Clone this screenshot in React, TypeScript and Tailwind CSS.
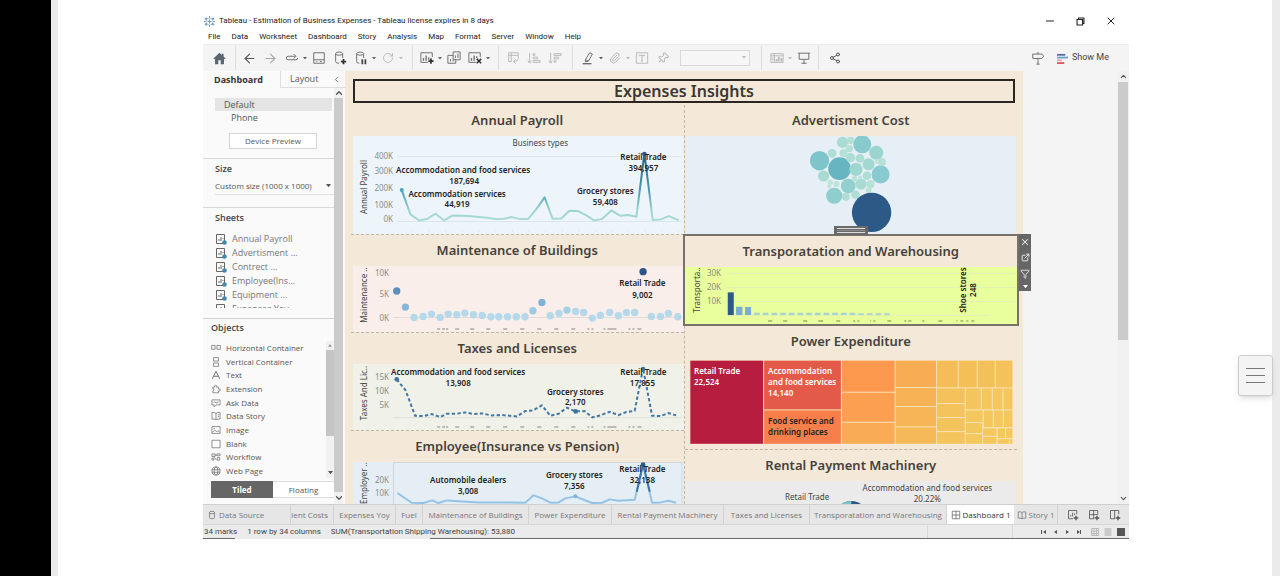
import React from "react";
import { ArrowLeft, ArrowRight, ChevronDown, ChevronLeft, ChevronUp, ExternalLink, Filter, Minus, Paperclip, Pin, RotateCw, Share2, X } from "lucide-react";

type IconProps = { children: React.ReactNode; className?: string };

function Icon({ children, className = "size-[14px] text-[#6e6e6e]" }: IconProps) {
  return (
    <svg viewBox="0 0 16 16" fill="none" stroke="currentColor" strokeWidth="1.1" className={className} aria-hidden="true">
      {children}
    </svg>
  );
}

function Tool({ label, children }: { label: string; children: React.ReactNode }) {
  return (
    <button aria-label={label} className="flex h-5 w-[21px] items-center justify-center">
      {children}
    </button>
  );
}

function Caret({ label, faint }: { label: string; faint?: boolean }) {
  return (
    <button aria-label={label} className="flex h-5 w-[6px] items-center justify-center">
      <svg viewBox="0 0 6 4" className={faint ? "w-1 text-[#bdbdbd]" : "w-1 text-[#666]"} fill="currentColor" aria-hidden="true">
        <path d="M0 0h6L3 4z" />
      </svg>
    </button>
  );
}

const dim = "size-[14px] text-[#b9b9b9]";

function TitleBar() {
  return (
    <header className="flex h-[18px] items-center text-[#222]">
      <Icon className="ml-px size-[11px] text-[#4a7ba8]">
        <circle cx="8" cy="8" r="5" stroke="#9bbcd8" />
        <path d="M8 5v6M5 8h6M3 2v4M1 4h4M13 2v4M11 4h4M3 10v4M1 12h4M13 10v4M11 12h4M8 0v3M8 13v3M0 8h2.500M13.500 8H16" />
      </Icon>
      <h1 className="ml-1 whitespace-nowrap font-['Roboto',sans-serif] text-[8px]">
        Tableau - Estimation of Business Expenses - Tableau license expires in 8 days
      </h1>
      <div className="ml-auto flex items-center gap-[19px] pr-3">
        <button aria-label="Minimize"><Minus className="size-3" strokeWidth={2} /></button>
        <button aria-label="Restore">
          <Icon className="size-[11px] text-[#222]">
            <path strokeWidth="1.6" d="M3 5h8v8H3zM5 5V3h8v8h-2" />
          </Icon>
        </button>
        <button aria-label="Close"><X className="size-3" strokeWidth={2} /></button>
      </div>
    </header>
  );
}

const menus = ["File", "Data", "Worksheet", "Dashboard", "Story", "Analysis", "Map", "Format", "Server", "Window", "Help"];

function MenuBar() {
  return (
    <nav className="flex h-[14px] items-center gap-[11px] pl-[5px] font-['Roboto',sans-serif] text-[8px] text-[#222]">
      {menus.map((m) => (
        <button key={m}>{m}</button>
      ))}
    </nav>
  );
}

function Sep() {
  return <span className="h-6 w-px bg-[#dcdcdc]" />;
}

function Toolbar() {
  return (
    <div className="flex h-[27px] items-center border-t border-[#ececec] bg-[#f4f4f4]">
      <button aria-label="Start page" className="flex w-8 justify-center">
        <svg viewBox="0 0 16 16" className="size-[13px] fill-[#5c6670]" aria-hidden="true">
          <path d="M8 1 .500 8l1 1L2.500 8v7H6.500v-5h3v5h4V8l1 1 1-1L13 5.500V2h-2v1.800z" />
        </svg>
      </button>
      <Sep />
      <div className="flex items-center pl-[3px] pr-2">
        <Tool label="Undo"><ArrowLeft className="size-[15px] text-[#555]" strokeWidth={1.8} /></Tool>
        <Tool label="Redo"><ArrowRight className="size-[15px] text-[#aaa]" strokeWidth={1.8} /></Tool>
        <Tool label="Replay"><Icon><path d="M12 6H3.500Q1.500 6 1.500 8t2 2h9q2 0 2-2M10 3.500 12.500 6 10 8.500" /></Icon></Tool>
        <Caret label="Replay options" />
        <Tool label="Save"><Icon><path d="M2 2h12v12H2zM2 10h12M5 12h1M9 12h2" /></Icon></Tool>
        <Tool label="New data source">
          <Icon><ellipse cx="7" cy="3" rx="4" ry="1.800" /><path d="M3 3v9q0 2 4 2M11 3v5" /><path strokeWidth="2" d="M12 9v6M9 12h6" stroke="#333" /></Icon>
        </Tool>
        <Tool label="Pause updates">
          <Icon><ellipse cx="7" cy="3" rx="4" ry="1.800" /><path d="M3 3v9q0 2 3 2M11 3v5" /><path strokeWidth="2" d="M9.500 9.500V15M13 9.500V15" stroke="#444" /></Icon>
        </Tool>
        <Caret label="Pause options" />
        <Tool label="Refresh"><RotateCw className="size-3 text-[#b9b9b9]" strokeWidth={1.8} /></Tool>
        <Caret label="Refresh options" faint />
      </div>
      <Sep />
      <div className="flex items-center pl-[3px] pr-[7px]">
        <Tool label="New worksheet">
          <Icon><path d="M14 7V2H1v11h8" /><path strokeWidth="1.500" d="M4 11V8M7 11V5M10 10V7" /><path strokeWidth="2" d="M12.500 8.500v6M9.500 11.500h6" stroke="#333" /></Icon>
        </Tool>
        <Caret label="New worksheet options" />
        <Tool label="Duplicate"><Icon><path d="M7 1h8v9H7zM7 5H1v9h9v-4M4 12V9M9.500 8V5M12.500 8V3M7 12v-2" /></Icon></Tool>
        <Tool label="Clear sheet">
          <Icon><path d="M14 7V2H1v11h8" /><path strokeWidth="1.500" d="M4 11V8M7 11V5M10 8V6" /><path strokeWidth="1.800" d="m10 9 5 5M15 9l-5 5" stroke="#333" /></Icon>
        </Tool>
        <Caret label="Clear options" />
      </div>
      <Sep />
      <div className="flex items-center pl-[3px] pr-[7px]">
        <Tool label="Swap rows and columns"><Icon className={dim}><path d="M3 2h11v3H6v7H3zM6 2v3M3 5h3M14 5v3q0 4-5 4M11 9.500 8.500 12l2.500 2.500" /></Icon></Tool>
        <Tool label="Sort ascending"><Icon className={dim}><path d="M3 2v11M1 11l2 3 2-3M7 3h2v2H7zM7 7h5v2H7zM7 11h8v2H7z" /></Icon></Tool>
        <Tool label="Sort descending"><Icon className={dim}><path d="M3 2v11M1 11l2 3 2-3M7 3h8v2H7zM7 7h5v2H7zM7 11h2v2H7z" /></Icon></Tool>
      </div>
      <Sep />
      <div className="flex items-center pl-1 pr-[11px]">
        <Tool label="Highlight"><Icon><path d="M5 10 10 2l3 1.500-4.500 8L5 12.500zM5 10l3.500 1.500" /><path strokeWidth="1.600" d="M2 14.500h10" /></Icon></Tool>
        <Caret label="Highlight options" />
        <Tool label="Group"><Paperclip className="size-3 text-[#b9b9b9]" strokeWidth={2} /></Tool>
        <Caret label="Group options" faint />
        <Tool label="Show labels"><Icon className={dim}><path d="M1.500 2h13v12h-13zM5 6V5h6v1M8 5v6.500M7 11.500h2" /></Icon></Tool>
        <Tool label="Fix axes"><Pin className="size-3 rotate-45 text-[#b9b9b9]" strokeWidth={2} /></Tool>
        <div className="relative ml-[7px]">
          <select aria-label="Fit" className="block h-4 w-[70px] appearance-none border border-[#d9d9d9] bg-[#f6f6f6]" />
          <svg viewBox="0 0 6 4" className="absolute right-1 top-1.5 w-1 fill-[#bdbdbd]" aria-hidden="true"><path d="M0 0h6L3 4z" /></svg>
        </div>
      </div>
      <Sep />
      <div className="flex items-center pl-1 pr-1">
        <Tool label="Show cards"><Icon className={dim}><path d="M1 3h14v10H1zM1 5.500h14M5 3v10M2 8h2M2 10h2" /><path strokeWidth="2" d="M7.500 12V9M10 12V6.500M13 12V8" /></Icon></Tool>
        <Caret label="Card options" faint />
        <Tool label="Presentation mode"><Icon><path d="M1 2.500h14M2.500 2.500v7h11v-7M8 9.500V14M5 14h6" /></Icon></Tool>
      </div>
      <Sep />
      <div className="pl-[5px]">
        <Tool label="Share"><Share2 className="size-3 text-[#555]" strokeWidth={2} /></Tool>
      </div>
      <button aria-label="Guide" className="ml-auto">
        <Icon><path d="M2 3.500h10.500l2 2.500-2 2.500H2zM8 1v2.500M8 8.500V15M6 15h4" /></Icon>
      </button>
      <button className="ml-3 mr-5 flex items-center gap-1 font-['Roboto',sans-serif] text-[9px] text-[#444]">
        <svg viewBox="0 0 12 12" className="size-[11px]" aria-hidden="true">
          <path stroke="#5f6fa8" strokeWidth="2" d="M0 2h9" />
          <path stroke="#6f9fd0" strokeWidth="2" d="M0 5h12" />
          <path stroke="#f0a0a0" strokeWidth="2" d="M0 8h5" />
          <path stroke="#e05560" strokeWidth="2" d="M0 11h8" />
        </svg>
        Show Me
      </button>
    </div>
  );
}

const sheets = ["Annual Payroll", "Advertisment ...", "Contrect ...", "Employee(Ins...", "Equipment ...", "Expenses Yoy"];

const objects: { name: string; icon: React.ReactNode }[] = [
  { name: "Horizontal Container", icon: <path d="M1 4h5.500v6H1zM9.500 4H15v6H9.500z" /> },
  { name: "Vertical Container", icon: <path d="M4 1h8v5.500H4zM4 9.500h8V15H4z" /> },
  { name: "Text", icon: <path strokeWidth="1.500" d="M2 14 8 2l6 12M4.500 10h7" /> },
  { name: "Extension", icon: <path d="M3 5h3q-1-3 1.500-3T9 5h3v3q3-1 3 1.500T12 11v3H3v-3q2-.5 2-2T3 8z" /> },
  { name: "Ask Data", icon: <path d="M1.500 3h13v8H8l-3 3v-3H1.500zM4 8l2-2 2 2 4-2" /> },
  { name: "Data Story", icon: <path d="M8 3.500V14M1.500 2.500H6L8 4l2-1.500h4.500V13H10l-2 1-2-1H1.500zM11 6h2M11 9h2" /> },
  { name: "Image", icon: <path d="M1.500 2.500h13v11h-13zM2 12l4-4 3 3 2-2 3 3M4 5.500h2" /> },
  { name: "Blank", icon: <path d="M1.500 2h13v12h-13z" /> },
  { name: "Workflow", icon: <path d="M1.500 3h5v4h-5zM9.500 3h5v3h-5zM1.500 10h3v3h-3zM6.500 5h3M4 7l5 6M10 9h4v4h-4z" /> },
  { name: "Web Page", icon: <><circle cx="8" cy="8" r="6.500" /><ellipse cx="8" cy="8" rx="3" ry="6.500" /><path d="M1.500 6h13M1.500 10h13" /></> },
];

function SidePanel() {
  return (
    <aside className="flex w-[142px] shrink-0 flex-col bg-[#fafafa] font-['Open_Sans',sans-serif] text-[#555]">
      <div className="flex h-[17px] items-stretch text-[9px]">
        <button className="w-[77px] pl-[11px] text-left font-bold text-[#333]">Dashboard</button>
        <button className="flex-1 border-b border-l border-[#dedede] pl-[9px] text-left">Layout</button>
        <button aria-label="Collapse pane" className="border-b border-[#dedede] pr-1"><ChevronLeft className="size-[9px]" /></button>
      </div>
      <div className="flex flex-1 pr-[2px]">
        <div className="flex min-w-0 flex-1 flex-col text-[8px]">
          <section className="h-[71px] border-b border-[#d9d9d9] pl-3 pt-[10px]">
            <button className="block h-[13px] w-[117px] bg-[#e4e4e4] pl-[9px] text-left text-[9px] leading-[13px]">Default</button>
            <button className="block h-[14px] pl-4 text-[9px] leading-[14px]">Phone</button>
            <button className="ml-[14px] mt-2 block h-4 w-[88px] border border-[#d5d5d5] bg-white leading-[14px]">Device Preview</button>
          </section>
          <section className="h-[49px] border-b border-[#d9d9d9] pl-3 pt-[3px]">
            <h2 className="text-[9px] font-semibold leading-[14px] text-[#444]">Size</h2>
            <div className="relative mt-[2px] border-b border-[#e2e2e2]">
              <select aria-label="Dashboard size" className="block h-4 w-full appearance-none bg-transparent">
                <option>Custom size (1000 x 1000)</option>
              </select>
              <svg viewBox="0 0 6 4" className="absolute right-[3px] top-1.5 w-[5px] fill-[#555]" aria-hidden="true"><path d="M0 0h6L3 4z" /></svg>
            </div>
          </section>
          <section className="h-[111px] border-b border-[#d0d0d0] pl-3 pt-[3px]">
            <h2 className="text-[9px] font-semibold leading-[14px] text-[#444]">Sheets</h2>
            <ul className="mt-[7px] h-[76px] overflow-hidden text-[9px] text-[#777]">
              {sheets.map((s) => (
                <li key={s} className="flex h-[14px] items-center gap-[5px]">
                  <svg viewBox="0 0 12 12" className="size-3" fill="none" aria-hidden="true">
                    <path stroke="#666" d="M1.500 1.500h8v9h-8zM4 8V6M6 8V4M8 6V5" />
                    <circle cx="9.500" cy="9.500" r="2.300" fill="#4689ac" />
                  </svg>
                  <span>{s}</span>
                </li>
              ))}
            </ul>
          </section>
          <section className="flex flex-1 flex-col pl-2">
            <h2 className="pt-px text-[9px] font-semibold leading-4 text-[#444]">Objects</h2>
            <div className="mt-[5px] flex">
              <ul className="grid h-[137px] flex-1 grid-rows-10">
                {objects.map((o) => (
                  <li key={o.name} className="flex items-center gap-[5px] whitespace-nowrap">
                    <Icon className="size-[10px] text-[#666]">{o.icon}</Icon>
                    <span>{o.name}</span>
                  </li>
                ))}
              </ul>
              <div className="flex w-2 flex-col items-center bg-[#f1f1f1]">
                <svg viewBox="0 0 6 4" className="my-[3px] w-1 fill-[#999]" aria-hidden="true"><path d="M0 4h6L3 0z" /></svg>
                <div className="h-[86px] w-full bg-[#c4c4c4]" />
                <svg viewBox="0 0 6 4" className="mb-1 mt-auto w-[5px] fill-[#555]" aria-hidden="true"><path d="M0 0h6L3 4z" /></svg>
              </div>
            </div>
            <div className="mt-[3px] flex h-[17px] text-[8px]">
              <button className="w-[62px] bg-[#666] font-bold text-white">Tiled</button>
              <button className="flex-1 border-y border-[#ddd] bg-white">Floating</button>
            </div>
          </section>
        </div>
        <div className="flex w-[9px] flex-col items-center bg-[#f1f1f1]">
          <ChevronUp className="size-[10px] text-[#555]" strokeWidth={3} />
          <div className="w-full flex-1 bg-[#cbcbcb]" />
          <ChevronDown className="my-px size-[10px] text-[#555]" strokeWidth={3} />
        </div>
      </div>
    </aside>
  );
}

type TextProps = { x: number; y: number; children: React.ReactNode };

function Mark({ x, y, children }: TextProps) {
  return <text x={x} y={y} textAnchor="middle" className="fill-[#222] text-[8px] font-semibold">{children}</text>;
}

function Tick({ x, y, children }: TextProps) {
  return <text x={x} y={y} textAnchor="end" className="fill-[#8c8c8c] text-[8px]">{children}</text>;
}

function AxisTitle({ x, y, children }: TextProps) {
  return <text transform={`translate(${x} ${y}) rotate(-90)`} textAnchor="middle" className="fill-[#444] text-[8px]">{children}</text>;
}

const chartFont = "block w-full font-['Noto_Sans',sans-serif]";

function AnnualPayroll() {
  return (
    <svg viewBox="353 136 330 98" className={`${chartFont} bg-[#edf5fa]`} role="img" aria-label="Annual Payroll line chart">
      <defs>
        <linearGradient id="payroll" gradientUnits="userSpaceOnUse" x1="0" y1="160" x2="0" y2="361">
          <stop offset="0" stopColor="#2c5985" /><stop offset=".55" stopColor="#4a9cb3" /><stop offset=".85" stopColor="#9bd5cc" /><stop offset="1" stopColor="#aadbd1" />
        </linearGradient>
      </defs>
      <path stroke="#dde6ea" d="M397 221.500h284M397 156.500h284" />
      <path stroke="#cfdde2" strokeDasharray="1 15.600" d="M412 230.500h270" />
      <g transform="translate(345 100) scale(.3333)">
        <polyline fill="none" stroke="url(#payroll)" strokeWidth="6" strokeLinejoin="round" points="170,270 196,343 222,361 245,357 271,341 297,361 322,346 370,348 425,353 450,357 475,356 500,351 525,357 548,357 575,325 598,292 622,356 648,355 672,332 698,333 722,345 746,361 770,357 798,331 824,347 848,345 873,350 897,160 922,360 946,358 970,348 1000,361" />
        <circle cx="170" cy="270" r="6" fill="#4aa5bb" /><circle cx="897" cy="162" r="7" fill="#2c5985" />
      </g>
      <text x="540" y="146" textAnchor="middle" className="fill-[#444] text-[8px]">Business types</text>
      <Tick x={393} y={159}>400K</Tick><Tick x={393} y={174}>300K</Tick><Tick x={393} y={191}>200K</Tick><Tick x={393} y={208}>100K</Tick><Tick x={393} y={222}>0K</Tick>
      <AxisTitle x={367} y={187}>Annual Payroll</AxisTitle>
      <Mark x={463} y={173}>Accommodation and food services</Mark><Mark x={464} y={184}>187,694</Mark>
      <Mark x={457} y={197}>Accommodation services</Mark><Mark x={457} y={207}>44,919</Mark>
      <Mark x={605} y={194}>Grocery stores</Mark><Mark x={605} y={205}>59,408</Mark>
      <Mark x={643} y={160}>Retail Trade</Mark><Mark x={643} y={171}>394,957</Mark>
    </svg>
  );
}

const pale = "#b5d8ea";
const dots: [number, number, string?][] = [
  [155, 168, "#5b8fbd"], [181, 216, "#85b8da"], [207, 247], [234, 244], [259, 237], [285, 247], [309, 237], [335, 239], [359, 234], [385, 239], [411, 241],
  [437, 245], [461, 245], [487, 245], [513, 245], [539, 245], [563, 227, "#9dcae3"], [590, 202, "#7fb2d6"], [615, 242], [641, 235], [665, 225, "#a5cfe6"], [691, 229],
  [715, 232], [741, 249], [765, 241], [793, 232], [819, 242], [843, 232], [868, 232], [893, 110, "#2a5783"], [918, 244], [945, 244], [969, 235], [997, 245],
];

const clipped = "M437 0h3M442 0h3M446 0h2M455 0h4M470 0h4M486 0h4M503 0h4M520 0h4M537 0h4M554 0h4M571 0h4M587 0h2M591 0h2M603 0h2M607 0h9M628 0h2M632 0h2M637 0h4";

function Maintenance() {
  return (
    <svg viewBox="353 266 330 66" className={`${chartFont} bg-[#f9eee9]`} role="img" aria-label="Maintenance of Buildings dot chart">
      <path stroke="#e4dcda" d="M393 317.500h288" />
      <path stroke="#8a8480" d={clipped} transform="translate(0 329)" />
      <g transform="translate(345 235) scale(.3333)">
        {dots.map(([x, y, c]) => <circle key={x} cx={x} cy={y} r="11" fill={c ?? pale} />)}
      </g>
      <Tick x={389} y={276}>10K</Tick><Tick x={389} y={297}>5K</Tick><Tick x={389} y={321}>0K</Tick>
      <AxisTitle x={367} y={295}>Maintenance ..</AxisTitle>
      <Mark x={642} y={286}>Retail Trade</Mark><Mark x={642} y={298}>9,002</Mark>
    </svg>
  );
}

function Taxes() {
  return (
    <svg viewBox="353 364 330 66" className={`${chartFont} bg-[#f0f1e8]`} role="img" aria-label="Taxes and Licenses line chart">
      <path stroke="#e0e2da" d="M393 417.500h288" />
      <path stroke="#8a8480" d={clipped} transform="translate(0 427)" />
      <g transform="translate(345 365) scale(.3333)">
        <polyline fill="none" stroke="#4377a8" strokeWidth="6" strokeDasharray="10 7" points="155,43 181,75 210,152 235,153 260,147 285,156 305,146 335,146 360,142 385,147 411,145 437,151 470,150 515,154 540,138 563,136 590,121 615,152 640,146 665,128 691,139 718,138 741,157 765,151 793,140 819,150 843,141 868,137 893,10 920,152 945,153 969,144 992,151" />
        <g fill="#3f73a3"><circle cx="155" cy="43" r="7" /><circle cx="691" cy="139" r="7" /><circle cx="893" cy="12" r="7" /></g>
      </g>
      <Tick x={389} y={380}>15K</Tick><Tick x={389} y={394}>10K</Tick><Tick x={389} y={408}>5K</Tick>
      <AxisTitle x={367} y={393}>Taxes And Lic..</AxisTitle>
      <Mark x={458} y={375}>Accommodation and food services</Mark><Mark x={458} y={386}>13,908</Mark>
      <Mark x={575} y={395}>Grocery stores</Mark><Mark x={575} y={405}>2,170</Mark>
      <Mark x={643} y={375}>Retail Trade</Mark><Mark x={642} y={386}>17,855</Mark>
    </svg>
  );
}

function Employee() {
  return (
    <svg viewBox="353 462 330 42" className={`${chartFont} bg-[#e6eef5]`} role="img" aria-label="Employee insurance and pension line chart">
      <path stroke="#cfd6dc" fill="none" d="M393.500 504V462.500h288V504" />
      <g transform="translate(345 365) scale(.3333)">
        <polyline fill="none" stroke="#94c3e4" strokeWidth="6" strokeLinejoin="round" points="157,384 200,413 235,414 262,406 280,414 305,406 400,412 540,413 565,391 590,400 615,413 640,412 660,400 690,394 715,404 741,414 770,413 793,403 819,407 868,404 893,297 920,413 945,412 969,407 992,413" />
        <path fill="none" stroke="#3f73a3" strokeWidth="6" strokeLinejoin="round" d="m874 380 19-82 20 82" />
        <circle cx="893" cy="299" r="7" fill="#2c5985" /><circle cx="690" cy="394" r="6" fill="#7fb3da" />
      </g>
      <Tick x={389} y={483}>20K</Tick><Tick x={389} y={496}>10K</Tick>
      <AxisTitle x={367} y={483}>Employer ..</AxisTitle>
      <Mark x={468} y={483}>Automobile dealers</Mark><Mark x={468} y={494}>3,008</Mark>
      <Mark x={574} y={478}>Grocery stores</Mark><Mark x={574} y={489}>7,356</Mark>
      <Mark x={642} y={472}>Retail Trade</Mark><Mark x={642} y={483}>32,138</Mark>
    </svg>
  );
}

const bubbles: [number, number, number, string][] = [
  [418, 182, 29, "#7dc5ca"], [478, 206, 34, "#66b5c1"], [546, 133, 27, "#88cacd"], [588, 158, 21, "#9bd4cf"], [601, 223, 27, "#88cacd"],
  [487, 127, 17, "#a9dbd3"], [511, 121, 11, "#b4e0d6"], [507, 146, 11, "#b4e0d6"], [456, 160, 13, "#aeddd4"], [490, 160, 12, "#b4e0d6"],
  [511, 173, 14, "#aeddd4"], [539, 175, 13, "#aeddd4"], [565, 193, 18, "#a3d8d1"], [605, 186, 12, "#b4e0d6"], [527, 208, 20, "#9fd6d0"],
  [560, 227, 13, "#aeddd4"], [430, 228, 17, "#a9dbd3"], [504, 258, 22, "#93d0cd"], [542, 252, 17, "#a9dbd3"], [462, 287, 24, "#8fcecd"],
  [497, 290, 12, "#b0ded5"], [526, 284, 13, "#b0ded5"], [571, 252, 12, "#b4e0d6"], [565, 270, 9, "#b9e2d9"], [450, 247, 8, "#bce4da"],
  [469, 252, 9, "#b9e2d9"], [447, 259, 6, "#bce4da"], [523, 235, 8, "#b9e2d9"], [589, 185, 6, "#bce4da"], [540, 232, 6, "#bce4da"], [574, 337, 59, "#2c5985"],
];

function Advertisement() {
  return (
    <svg viewBox="686 136 330 98" className="block w-full bg-[#e6eff5]" role="img" aria-label="Advertisement cost bubble chart">
      <g transform="translate(680 100) scale(.3333)">
        {bubbles.map(([x, y, r, c], i) => <circle key={i} cx={x} cy={y} r={r} fill={c} />)}
      </g>
    </svg>
  );
}

const bars = [234, 260, 286, 312, 338, 364, 390, 416, 442, 468, 494, 520, 546, 572, 598, 624];

function Transportation() {
  return (
    <svg viewBox="685 267 332 57" className={`${chartFont} bg-[#e9ff9d]`} role="img" aria-label="Transportation and Warehousing bar chart">
      <path stroke="#e3f2b4" d="M727 273.500h288M727 287.500h288M727 301.500h288M727 315.500h262" />
      <g transform="translate(680 230) scale(.3333)">
        <path fill="#2c5985" d="M143 187h18v68h-18z" /><path fill="#79aed2" d="M168 230h19v25h-19zM195 231h18v24h-18z" />
        {bars.map((x) => <rect key={x} x={x - 12} y={x > 520 ? 250 : 248} width="17" height={x > 520 ? 5 : 7} fill="#a9d2d0" />)}
      </g>
      <path stroke="#7b8a4a" d="M768 321h4M783 321h4M803 321h4M818 321h5M836 321h4M853 321h2M857 321h2M870 321h1M873 321h2M887 321h4M904 321h2M908 321h3M922 321h2M938 321h4M956 321h1M960 321h3M966 321h2M971 321h3" />
      <Tick x={721} y={276}>30K</Tick><Tick x={721} y={290}>20K</Tick><Tick x={721} y={304}>10K</Tick>
      <AxisTitle x={700} y={290}>Transporta..</AxisTitle>
      <g transform="rotate(-90 965 290)">
        <Mark x={965} y={291}>Shoe stores</Mark><Mark x={965} y={301}>248</Mark>
      </g>
    </svg>
  );
}

const tiles: [number, number, number, number, string][] = [
  [31, 32, 249, 281, "#b71d3e"], [252, 32, 482, 178, "#e35b48"], [252, 181, 482, 281, "#f67f4b"],
  [485, 32, 643, 125, "#fd994f"], [485, 128, 643, 215, "#fd9f51"], [485, 218, 643, 281, "#f9ab55"],
  [646, 32, 767, 111, "#f8ad54"], [646, 114, 767, 168, "#f7b256"], [646, 171, 767, 229, "#f6b557"], [646, 232, 767, 281, "#f5b958"],
  [770, 32, 832, 112, "#f5bd58"], [835, 32, 889, 112, "#f5bf58"], [892, 32, 943, 112, "#f4c059"], [946, 32, 996, 112, "#f4c15a"],
  [770, 115, 853, 159, "#f4c15a"], [770, 162, 853, 201, "#f4c35b"], [770, 204, 853, 243, "#f4c45c"], [770, 246, 853, 281, "#f4c55c"],
  [856, 115, 901, 178, "#f4c55c"], [904, 115, 934, 178, "#f4c65d"], [937, 115, 966, 178, "#f4c65d"], [969, 115, 996, 178, "#f4c75e"],
  [856, 181, 907, 216, "#f4c75e"], [856, 219, 905, 249, "#f4c75e"], [856, 252, 905, 281, "#f4c85f"],
  [910, 181, 937, 231, "#f4c75e"], [940, 181, 967, 231, "#f4c85f"], [970, 181, 996, 231, "#f4c85f"],
  [908, 235, 948, 257, "#f4c85f"], [908, 260, 948, 281, "#f4c85f"], [952, 235, 974, 264, "#f4c85f"], [977, 235, 996, 264, "#f4c85f"], [952, 267, 986, 281, "#f4c85f"], [989, 267, 996, 281, "#f4c85f"],
];

function PowerTreemap() {
  return (
    <svg viewBox="686 360 330 85" className={chartFont} role="img" aria-label="Power Expenditure treemap">
      <path fill="#fbe3b4" d="M690 360.500h322V444H690z" />
      <g transform="translate(680 350) scale(.3333)">
        {tiles.map(([x1, y1, x2, y2, c]) => <rect key={`${x1}-${y1}`} x={x1} y={y1} width={x2 - x1} height={y2 - y1} fill={c} />)}
      </g>
      <g className="fill-white text-[8px] font-semibold">
        <text x="694" y="374">Retail Trade</text><text x="694" y="385">22,524</text>
        <text x="768" y="374">Accommodation</text><text x="768" y="385">and food services</text><text x="768" y="396">14,140</text>
      </g>
      <g className="fill-[#222] text-[8px] font-semibold">
        <text x="768" y="424">Food service and</text><text x="768" y="435">drinking places</text>
      </g>
    </svg>
  );
}

function Rental() {
  return (
    <svg viewBox="686 481 330 23" className={`${chartFont} bg-[#ebebeb]`} role="img" aria-label="Rental Payment Machinery pie chart">
      <circle cx="851" cy="518" r="17" fill="#2c5985" />
      <path fill="#7dc5ca" d="M851 518V501a17 17 0 0 0-17 17z" />
      <g className="fill-[#444] text-[8px]">
        <text x="807" y="500" textAnchor="middle">Retail Trade</text>
        <text x="927" y="491" textAnchor="middle">Accommodation and food services</text>
        <text x="927" y="502" textAnchor="middle">20.22%</text>
      </g>
    </svg>
  );
}

function PanelTitle({ children }: { children: React.ReactNode }) {
  return <h3 className="flex h-[31px] items-center justify-center text-[13px] font-semibold text-[#45423d]">{children}</h3>;
}

const dashed = "border-b border-dashed border-[#bdb6ab]";

function Dashboard() {
  return (
    <main className="min-w-0 flex-1 bg-[#f4e9d8] px-[6px] pt-2 font-['Noto_Sans',sans-serif]">
      <h2 className="mx-[2px] flex h-6 items-center justify-center border-2 border-[#2b2622] text-[16px] font-semibold text-[#3b3733]">
        Expenses Insights
      </h2>
      <div className="mt-[2px] flex">
        <div className="flex-1 border-r border-dashed border-[#bdb6ab]">
          <section className={dashed}><PanelTitle>Annual Payroll</PanelTitle><div className="pl-[2px]"><AnnualPayroll /></div></section>
          <section className={dashed}><PanelTitle>Maintenance of Buildings</PanelTitle><div className="pl-[2px]"><Maintenance /></div></section>
          <section className={dashed}><PanelTitle>Taxes and Licenses</PanelTitle><div className="pl-[2px]"><Taxes /></div></section>
          <section><PanelTitle>Employee(Insurance vs Pension)</PanelTitle><div className="pl-[2px]"><Employee /></div></section>
        </div>
        <div className="flex-1">
          <section><PanelTitle>Advertisment Cost</PanelTitle><div className="px-px"><Advertisement /></div></section>
          <section className="relative -mx-[2px] border-2 border-[#77716c]">
            <PanelTitle>Transporatation and Warehousing</PanelTitle>
            <Transportation />
            <div className="absolute -top-[10px] left-1/2 flex h-[9px] w-[34px] -translate-x-1/2 flex-col justify-center gap-px bg-[#6a6a6a] px-[3px]">
              <span className="h-px bg-[#ddd]" /><span className="h-px bg-[#888]" /><span className="h-px bg-[#ddd]" />
            </div>
            <div className="absolute -right-[14px] -top-[2px] flex h-[57px] w-3 flex-col items-center justify-around bg-[#666] text-[#eee]">
              <button aria-label="Remove"><X className="size-[10px]" strokeWidth={2.5} /></button>
              <button aria-label="Go to sheet"><ExternalLink className="size-[9px]" strokeWidth={2.5} /></button>
              <button aria-label="Use as filter"><Filter className="size-[10px]" strokeWidth={2} /></button>
              <button aria-label="More options"><svg viewBox="0 0 6 4" className="w-[5px] fill-white" aria-hidden="true"><path d="M0 0h6L3 4z" /></svg></button>
            </div>
          </section>
          <section className={`${dashed} pb-1`}><PanelTitle>Power Expenditure</PanelTitle><div className="px-px pt-[3px]"><PowerTreemap /></div></section>
          <section><PanelTitle>Rental Payment Machinery</PanelTitle><div className="px-px"><Rental /></div></section>
        </div>
      </div>
    </main>
  );
}

const sheetTabs: [string, string][] = [
  ["Expenses Yoy", "w-[62px]"], ["Fuel", "w-[27px]"], ["Maintenance of Buildings", "w-[106px]"], ["Power Expenditure", "w-[83px]"],
  ["Rental Payment Machinery", "w-[112px]"], ["Taxes and Licenses", "w-[86px]"], ["Transporatation and Warehousing", "w-[137px]"],
];

function SheetTabs() {
  return (
    <div className="flex h-5 items-stretch whitespace-nowrap border-t border-[#cfcfcf] bg-[#e6e6e6] font-['Open_Sans',sans-serif] text-[8px] text-[#777]">
      <button className="flex w-[88px] items-center gap-[2px] border-r border-[#d2d2d2] pl-1">
        <Icon className="size-[10px] text-[#666]"><ellipse cx="8" cy="4" rx="4" ry="2" /><path d="M4 4v8q0 2 4 2t4-2V4" /></Icon>
        Data Source
      </button>
      <button className="flex w-[43px] items-center justify-end overflow-hidden border-r border-[#d2d2d2] pr-[5px]">ient Costs</button>
      {sheetTabs.map(([name, width]) => (
        <button key={name} className={`${width} shrink-0 border-r border-[#d2d2d2]`}>{name}</button>
      ))}
      <button className="flex w-[67px] items-center justify-center gap-[2px] bg-white text-[#333]">
        <Icon className="size-[10px] text-[#555]"><path d="M2 2h12v12H2zM8 2v12M2 8h12" /></Icon>
        Dashboard 1
      </button>
      <button className="flex w-[44px] items-center justify-center gap-[2px] border-r border-[#d2d2d2]">
        <Icon className="size-[10px] text-[#666]"><path d="M8 4v10M2 3h4l2 1 2-1h4v10h-4l-2 1-2-1H2z" /></Icon>
        Story 1
      </button>
      <div className="flex flex-1 items-center justify-around px-1">
        <button aria-label="New worksheet"><Icon className="size-3 text-[#555]"><path d="M13 7V2H2v11h6M5 10V8M7.500 10V5M10 8V6" /><path strokeWidth="1.800" d="M12 9v6M9 12h6" /></Icon></button>
        <button aria-label="New dashboard"><Icon className="size-3 text-[#555]"><path d="M13 7V2H2v11h6M7.500 2v11M2 7.500h11" /><path strokeWidth="1.800" d="M12 9v6M9 12h6" /></Icon></button>
        <button aria-label="New story"><Icon className="size-3 text-[#555]"><path d="M13 7V2H2v11h6M7.500 2v11" /><path strokeWidth="1.800" d="M12 9v6M9 12h6" /></Icon></button>
      </div>
    </div>
  );
}

function StatusBar() {
  return (
    <footer className="border-t border-[#d6d6d6] bg-[#ebebeb] font-['Roboto',sans-serif] text-[8px] text-[#444]">
      <div className="flex h-[13px] items-center gap-[10px] pl-px">
        <span>34 marks</span>
        <span>1 row by 34 columns</span>
        <span>SUM(Transportation Shipping Warehousing): 53,880</span>
        <div className="ml-auto flex items-center gap-[5px] self-stretch pr-1 text-[#555]">
          <span className="mr-[22px] h-full w-[86px] border-l border-r border-[#d8d8d8]" />
          <svg viewBox="0 0 42 8" className="mr-1 w-[42px]" fill="currentColor" aria-hidden="true">
            <path d="M1 2h1v4H1zM6 2v4L3 4zM17 2v4l-3-2zM26 2v4l3-2zM37 2v4l3-2zM40 2h1v4h-1z" />
          </svg>
          <svg viewBox="0 0 8 8" className="size-2" aria-hidden="true"><path stroke="#bbb" fill="none" d="M.5.500h7v7h-7zM3 0v8M5.500 0v8M0 3h8M0 5.500h8" /></svg>
          <svg viewBox="0 0 8 8" className="size-2" aria-hidden="true"><path stroke="#aaa" fill="none" d="M.5 1h7M.5 3h7M.5 5h7M.5 7h7" /></svg>
          <span className="size-2 bg-[#555]" />
        </div>
      </div>
      <div className="flex h-px">
        <span className="w-8 bg-[#6a6a6a]" />
        <span className="ml-[195px] flex-1 bg-[#6a6a6a]" />
      </div>
    </footer>
  );
}

export default function App() {
  return (
    <div className="flex min-h-screen bg-white">
      <div className="w-[51px] bg-black" />
      <div className="w-[7px] bg-[#ebebeb]" />
      <div className="min-w-0 flex-1 pl-[145px] pr-[143px] pt-3">
        <div className="overflow-hidden">
          <TitleBar />
          <MenuBar />
          <Toolbar />
          <div className="flex h-[433px] overflow-hidden bg-[#f4f4f4]">
            <SidePanel />
            <Dashboard />
            <div className="w-[94px]" />
            <div className="flex w-3 flex-col items-center bg-[#f1f1f1]">
              <ChevronUp className="my-px size-[9px] text-[#555]" strokeWidth={3} />
              <div className="h-[258px] w-[10px] bg-[#cbcbcb]" />
              <ChevronDown className="mb-px mt-auto size-[9px] text-[#555]" strokeWidth={3} />
            </div>
          </div>
          <SheetTabs />
          <StatusBar />
        </div>
      </div>
      <div className="w-2 bg-[#ebebeb]" />
      <button aria-label="Open menu" className="fixed right-[7px] top-[355px] flex h-[41px] w-[35px] flex-col items-center justify-center gap-[6px] rounded-[3px] border border-[#ccc] bg-[#f4f4f4] shadow-md">
        <span className="h-px w-[19px] bg-[#777]" />
        <span className="h-px w-[19px] bg-[#777]" />
        <span className="h-px w-[19px] bg-[#777]" />
      </button>
    </div>
  );
}
